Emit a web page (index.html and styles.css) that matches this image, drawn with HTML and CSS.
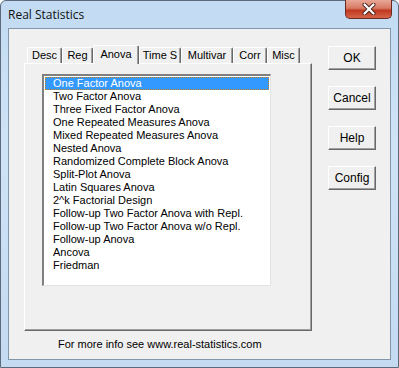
FILE: index.html
```html
<!DOCTYPE html>
<html lang="en">
<head>
    <meta charset="UTF-8">
    <title>Real Statistics</title>
    <link rel="stylesheet" href="styles.css">
</head>
<body>
    <div class="window">
        <div class="titlebar">
            <span class="title">Real Statistics</span>
            <div class="close-btn">
                <svg width="16" height="12" viewBox="0 0 16 12">
                    <path d="M3.5 1.5 L12.5 10.5 M12.5 1.5 L3.5 10.5" stroke="#4a2620" stroke-width="4" stroke-linecap="round"/>
                    <path d="M3.5 1.5 L12.5 10.5 M12.5 1.5 L3.5 10.5" stroke="#fff" stroke-width="2.2" stroke-linecap="round"/>
                </svg>
            </div>
        </div>
        <div class="client">
            <div class="main-row">
                <div class="tab-area">
                    <div class="tabs">
                        <div class="tab tab-desc">Desc</div>
                        <div class="tab tab-reg">Reg</div>
                        <div class="tab tab-anova active">Anova</div>
                        <div class="tab tab-time">Time S</div>
                        <div class="tab tab-multi">Multivar</div>
                        <div class="tab tab-corr">Corr</div>
                        <div class="tab tab-misc">Misc</div>
                    </div>
                    <div class="panel">
                        <ul class="listbox">
                            <li class="selected">One Factor Anova</li>
                            <li>Two Factor Anova</li>
                            <li>Three Fixed Factor Anova</li>
                            <li>One Repeated Measures Anova</li>
                            <li>Mixed Repeated Measures Anova</li>
                            <li>Nested Anova</li>
                            <li>Randomized Complete Block Anova</li>
                            <li>Split-Plot Anova</li>
                            <li>Latin Squares Anova</li>
                            <li>2^k Factorial Design</li>
                            <li>Follow-up Two Factor Anova with Repl.</li>
                            <li>Follow-up Two Factor Anova w/o Repl.</li>
                            <li>Follow-up Anova</li>
                            <li>Ancova</li>
                            <li>Friedman</li>
                        </ul>
                    </div>
                </div>
                <div class="buttons">
                    <button class="btn">OK</button>
                    <button class="btn">Cancel</button>
                    <button class="btn">Help</button>
                    <button class="btn">Config</button>
                </div>
            </div>
            <p class="info">For more info see www.real-statistics.com</p>
        </div>
    </div>
</body>
</html>
```

FILE: styles.css
```css
body {
    margin: 0;
    padding: 0;
    background-color: #fff;
    font-family: "Liberation Sans", Arial, sans-serif;
}

.window {
    width: 399px;
    height: 368px;
    box-sizing: border-box;
    border: 1px solid #5b6b7c;
    border-radius: 6px 6px 0 0;
    background: linear-gradient(180deg, #c2dbf2 0%, #cfe3f6 40%, #c3daf1 100%);
    display: flex;
    flex-direction: column;
}

.titlebar {
    height: 27px;
    display: flex;
    justify-content: space-between;
    align-items: flex-start;
}

.title {
    font-family: "Open Sans", "Noto Sans", sans-serif;
    font-size: 12px;
    color: #111;
    margin: 5px 0 0 7px;
}

.close-btn {
    width: 47px;
    height: 19px;
    margin-right: 6px;
    margin-top: -1px;
    border: 1px solid #6b2a22;
    border-top: none;
    border-radius: 0 0 5px 5px;
    background: linear-gradient(180deg, #e9a898 0%, #d97a64 45%, #c0391f 58%, #d5654a 100%);
    display: flex;
    align-items: center;
    justify-content: center;
    box-sizing: border-box;
}

.client {
    flex: 1;
    margin: 0 7px 7px 7px;
    background-color: #f0f0f0;
    border: 1px solid #8396aa;
    display: flex;
    flex-direction: column;
}

.main-row {
    display: flex;
    padding: 16px 0 0 15px;
}

.tab-area {
    width: 288px;
}

.tabs {
    display: flex;
    padding-left: 3px;
    height: 18px;
    align-items: flex-end;
    font-size: 11px;
}

.tab {
    height: 16px;
    box-sizing: border-box;
    line-height: 15px;
    text-align: center;
    white-space: nowrap;
    color: #000;
    background-color: #f0f0f0;
    border-top: 1px solid #fff;
    border-left: 1px solid #fff;
    border-right: 1px solid #696969;
    box-shadow: inset -1px 0 0 #a0a0a0;
    border-radius: 2px 2px 0 0;
}

.tab-desc { width: 35px; }
.tab-reg { width: 31px; }
.tab-anova { width: 46px; }
.tab-time { width: 42px; }
.tab-multi { width: 52px; }
.tab-corr { width: 34px; }
.tab-misc { width: 33px; }

.tab.active {
    height: 19px;
    line-height: 16px;
    position: relative;
    z-index: 1;
    margin-bottom: -1px;
}

.panel {
    height: 268px;
    box-sizing: border-box;
    border-top: 1px solid #fff;
    border-left: 1px solid #fff;
    border-right: 1px solid #696969;
    border-bottom: 1px solid #696969;
    box-shadow: inset -1px -1px 0 #a0a0a0;
    padding: 10px 0 0 17px;
}

.listbox {
    list-style: none;
    margin: 0;
    width: 229px;
    height: 212px;
    box-sizing: border-box;
    background-color: #fff;
    border-top: 2px solid #808080;
    border-left: 2px solid #808080;
    border-right: 1px solid #e3e3e3;
    border-bottom: 1px solid #e3e3e3;
    padding: 1px 1px 0 1px;
    font-size: 11px;
}

.listbox li {
    height: 13px;
    line-height: 13px;
    padding-left: 8px;
    color: #000;
    white-space: nowrap;
}

.listbox li.selected {
    background-color: #3399ff;
    color: #fff;
    outline: 1px dotted #c87f1e;
    outline-offset: -1px;
}

.buttons {
    display: flex;
    flex-direction: column;
    gap: 16px;
    margin-left: 16px;
    padding-top: 1px;
}

.btn {
    width: 48px;
    height: 24px;
    font-family: "Liberation Sans", Arial, sans-serif;
    font-size: 12px;
    color: #000;
    background-color: #f0f0f0;
    border-top: 1px solid #fff;
    border-left: 1px solid #fff;
    border-right: 1px solid #696969;
    border-bottom: 1px solid #696969;
    box-shadow: inset -1px -1px 0 #a0a0a0;
    padding: 0;
}

.info {
    margin: 7px 0 0 49px;
    font-size: 11px;
    color: #000;
}
```
